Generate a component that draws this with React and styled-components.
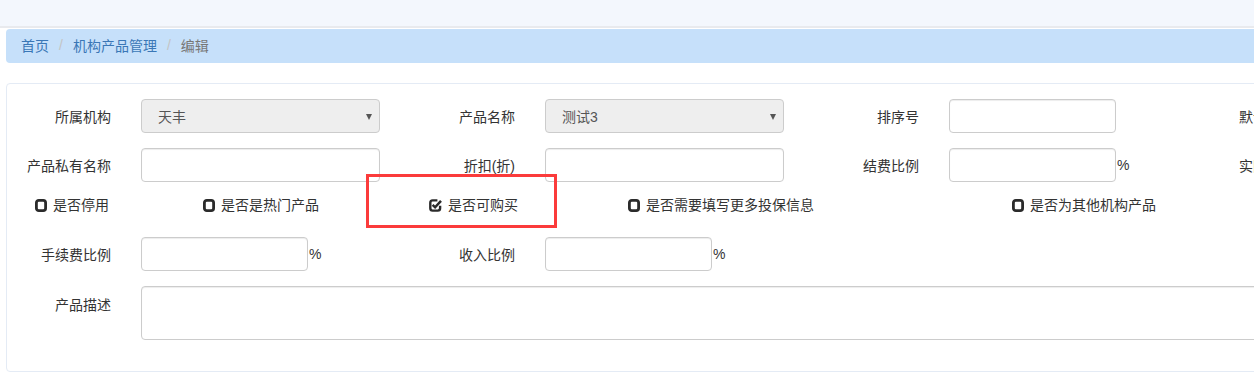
import styled, { createGlobalStyle } from 'styled-components';

const Global = createGlobalStyle`
   body{
      margin: 0;
      background: #fff;
      overflow: hidden;
      font-family: "Liberation Sans", "Noto Sans CJK SC", sans-serif;
      font-size: 14px;
      color: #333;
   }
`;

const SquareIcon = () => (
   <svg width="12" height="13" viewBox="0 0 12 13">
      <rect x="1.4" y="1.4" width="9.2" height="10.2" rx="2.4" fill="none" stroke="#2b2b2b" strokeWidth="2.8" />
   </svg>
);

const CheckedIcon = () => (
   <svg width="13" height="13" viewBox="0 0 13 13">
      <path d="M8.4 1.4 H3.6 a2.3 2.3 0 0 0 -2.3 2.3 v5.6 a2.3 2.3 0 0 0 2.3 2.3 h5.2 a2.3 2.3 0 0 0 2.3 -2.3 v-2.6"
         fill="none" stroke="#2b2b2b" strokeWidth="2.4" />
      <path d="M3.6 5.8 L6.1 8.3 L12 1.8" fill="none" stroke="#2b2b2b" strokeWidth="2.5" />
   </svg>
);

const rows = [
   [
      { label: '所属机构', select: '天丰' },
      { label: '产品名称', select: '测试3' },
      { label: '排序号', short: true },
      { label: '默认显示顺序', short: true },
   ],
   [
      { label: '产品私有名称' },
      { label: '折扣(折)' },
      { label: '结费比例', short: true, percent: true },
      { label: '实际结费比例', short: true, percent: true },
   ],
];

const checks = [
   { text: '是否停用', width: 168 },
   { text: '是否是热门产品', width: 226 },
   { text: '是否可购买', width: 199, checked: true, marked: true },
   { text: '是否需要填写更多投保信息', width: 384 },
   { text: '是否为其他机构产品', width: 300 },
];

const Field = ({ f }) => (
   <Group>
      <Label>{f.label}</Label>
      {f.select ? (
         <Select>{f.select}</Select>
      ) : (
         <Input $short={f.short} />
      )}
      {f.percent && <Percent>%</Percent>}
   </Group>
);

const App = () => {
   return (
      <Page>
         <Global />
         <TopBar />
         <Breadcrumb>
            <Crumb>首页</Crumb>
            <Slash>/</Slash>
            <Crumb>机构产品管理</Crumb>
            <Slash>/</Slash>
            <Crumb $active>编辑</Crumb>
         </Breadcrumb>

         <Panel>
            {rows.map((r, i) => (
               <Row key={i}>
                  {r.map(f => <Field key={f.label} f={f} />)}
               </Row>
            ))}

            <CheckRow>
               {checks.map(c => (
                  <CheckItem key={c.text} $w={c.width}>
                     {c.checked ? <CheckedIcon /> : <SquareIcon />}
                     <span>{c.text}</span>
                     {c.marked && <Mark />}
                  </CheckItem>
               ))}
            </CheckRow>

            <Row>
               <Field f={{ label: '手续费比例', short: true, percent: true }} />
               <Field f={{ label: '收入比例', short: true, percent: true }} />
            </Row>

            <Row $top>
               <Group $wide>
                  <Label $top>产品描述</Label>
                  <TextArea />
               </Group>
            </Row>
         </Panel>
      </Page>
   );
};

// style component
const Page = styled.div`
   width: 1254px;
   height: 384px;
   overflow: hidden;
`;

const TopBar = styled.div`
   height: 26px;
   background: #f3f7fd;
   border-bottom: 2px solid #e8eaee;
`;

const Breadcrumb = styled.div`
   margin: 1px 0 0 6px;
   width: 1600px;
   height: 34px;
   box-sizing: border-box;
   padding: 0 15px 3px;
   display: flex;
   align-items: center;
   background: #c6e0fa;
   border-radius: 4px;
`;

const Crumb = styled.span`
   color: ${p => p.$active ? '#777' : '#3a77b6'};
`;

const Slash = styled.span`
   color: #c4c4c4;
   margin: 0 10px;
`;

const Panel = styled.div`
   margin: 20px 0 0 6px;
   width: 1700px;
   box-sizing: border-box;
   border: 1px solid #e4ebf5;
   border-radius: 4px;
   padding: 15px 15px 31px;
   display: flex;
   flex-direction: column;
   gap: 15px;
`;

const Row = styled.div`
   display: flex;
   align-items: ${p => p.$top ? 'flex-start' : 'center'};
`;

const Group = styled.div`
   display: flex;
   align-items: ${p => p.$wide ? 'flex-start' : 'center'};
   width: ${p => p.$wide ? '1600px' : '404px'};
`;

const Label = styled.label`
   width: 89px;
   margin-right: 30px;
   flex-shrink: 0;
   display: flex;
   justify-content: flex-end;
   white-space: nowrap;
   color: #333;
   padding-top: ${p => p.$top ? '8px' : '0'};
`;

const Input = styled.div`
   width: ${p => p.$short ? '167px' : '239px'};
   height: 34px;
   box-sizing: border-box;
   border: 1px solid #ccc;
   border-radius: 4px;
   background: #fff;
   box-shadow: inset 0 1px 1px rgba(0,0,0,.075);
`;

const Select = styled.div`
   position: relative;
   width: 239px;
   height: 34px;
   box-sizing: border-box;
   border: 1px solid #ccc;
   border-radius: 4px;
   background: #eee;
   color: #555;
   padding-left: 16px;
   display: flex;
   align-items: center;

   &::after{
      content: "";
      position: absolute;
      right: 7px;
      top: 14px;
      border-left: 3.5px solid transparent;
      border-right: 3.5px solid transparent;
      border-top: 6px solid #555;
   }
`;

const Percent = styled.span`
   margin-left: 1px;
   color: #333;
`;

const TextArea = styled.div`
   width: 1400px;
   height: 54px;
   box-sizing: border-box;
   border: 1px solid #ccc;
   border-radius: 4px;
   box-shadow: inset 0 1px 1px rgba(0,0,0,.075);
`;

const CheckRow = styled.div`
   height: 25px;
   display: flex;
   align-items: flex-start;
   padding-left: 13px;
`;

const CheckItem = styled.div`
   position: relative;
   width: ${p => p.$w}px;
   flex-shrink: 0;
   display: flex;
   align-items: center;
   gap: 6px;
   line-height: 17px;
   color: #333;
   white-space: nowrap;

   svg{
      flex-shrink: 0;
   }
`;

const Mark = styled.div`
   position: absolute;
   left: -63px;
   top: -23px;
   width: 191px;
   height: 54px;
   box-sizing: border-box;
   border: 3px solid #fb3b3b;
`;

export default App;
